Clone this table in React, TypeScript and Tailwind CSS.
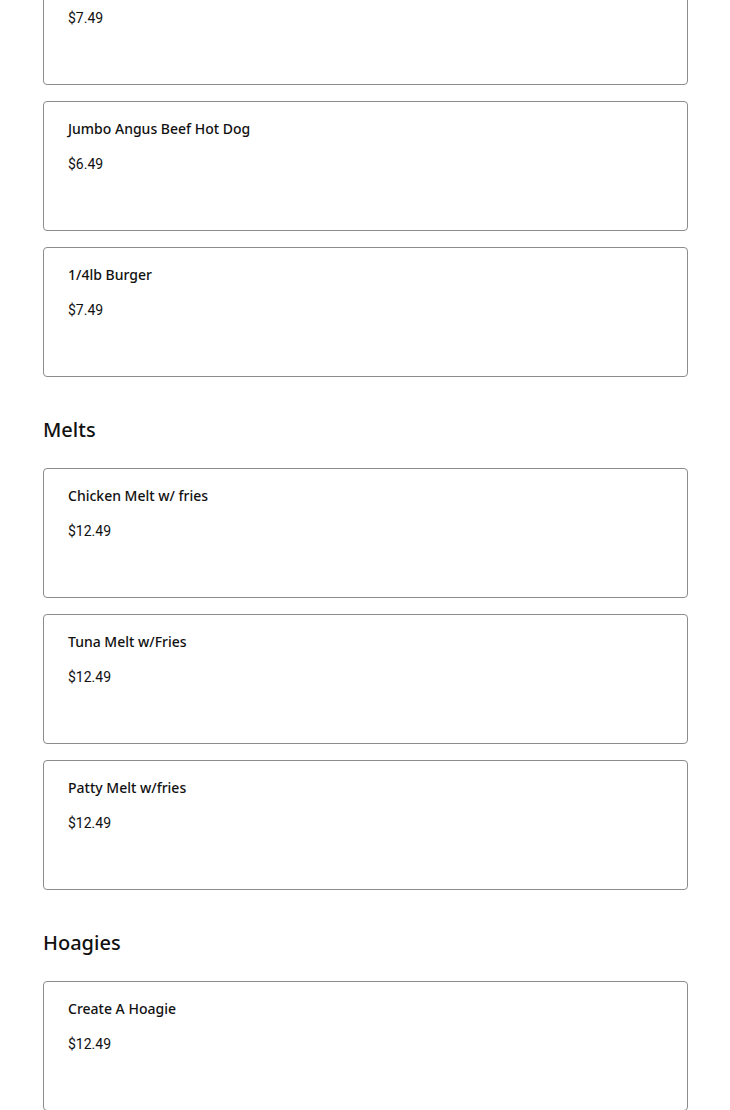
const sections = [
  {
    title: '',
    items: [
      { name: 'Chili Cheese Dog', price: '$7.49' },
      { name: 'Jumbo Angus Beef Hot Dog', price: '$6.49' },
      { name: '1/4lb Burger', price: '$7.49' },
    ],
  },
  {
    title: 'Melts',
    items: [
      { name: 'Chicken Melt w/ fries', price: '$12.49' },
      { name: 'Tuna Melt w/Fries', price: '$12.49' },
      { name: 'Patty Melt w/fries', price: '$12.49' },
    ],
  },
  {
    title: 'Hoagies',
    items: [{ name: 'Create A Hoagie', price: '$12.49' }],
  },
];

const MenuCard = ({ name, price }: { name: string; price: string }) => (
  <div className="h-[130px] rounded-[4px] border border-[#8c8c8c] bg-white px-6 pt-[17px]">
    <p className="text-[14px] leading-5 font-medium text-[#111] [font-family:'Noto_Sans',sans-serif]">{name}</p>
    <p className="mt-[15px] text-[14px] leading-5 text-[#111] [font-family:Roboto,sans-serif]">{price}</p>
  </div>
);

export default function App() {
  return (
    <div className="h-[1110px] overflow-hidden bg-white">
      <div className="-mt-[45px] pl-[43px] pr-[42px]">
        {sections.map((section, i) => (
          <section key={i}>
            {section.title && (
              <h2 className="mt-[39px] mb-6 text-[20px] leading-7 font-medium text-[#111] [font-family:'Noto_Sans',sans-serif]">
                {section.title}
              </h2>
            )}
            <div className="flex flex-col gap-4">
              {section.items.map((item) => (
                <MenuCard key={item.name} {...item} />
              ))}
            </div>
          </section>
        ))}
      </div>
    </div>
  );
}
